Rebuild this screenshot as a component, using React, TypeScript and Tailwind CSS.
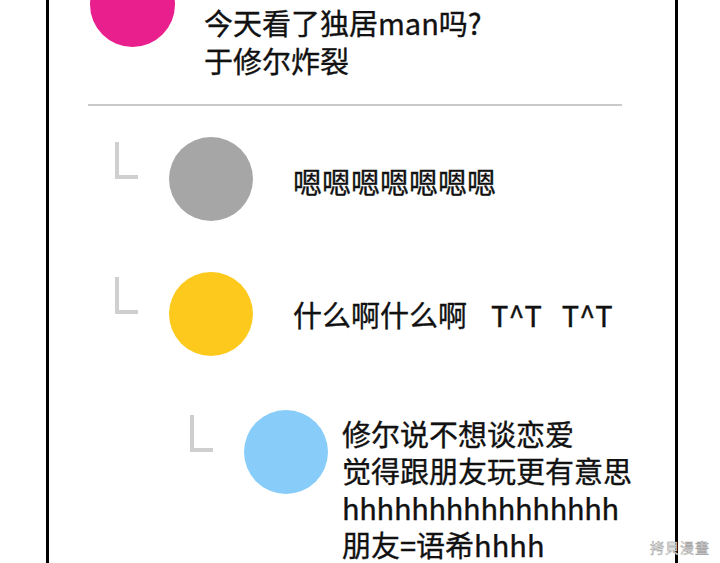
const FONT = "font-['Noto_Sans_CJK_SC','Noto_Sans',sans-serif]";
const TEXT = "text-[29px] [-webkit-text-stroke:0.35px_#111]";

function Avatar({ color, big }: { color: string; big?: boolean }) {
  return <div className={`${big ? "w-[85px] h-[85px]" : "w-[84px] h-[84px]"} shrink-0 rounded-full ${color}`} />;
}

function Corner() {
  // reply marker: thin grey "L"
  return <div className="self-start mt-[5px] w-[23px] h-[37px] shrink-0 border-l-4 border-b-4 border-[#cfcfcf]" />;
}

export default function App() {
  return (
    <div className={`relative w-[720px] h-[563px] overflow-hidden bg-white text-[#111] ${FONT}`}>
      <div className="ml-[46px] w-[632px] h-full border-x-[3px] border-black">
        {/* original post */}
        <div className="flex items-start pl-[41px]">
          <div className="-mt-[38px]">
            <Avatar color="bg-[#e91f8e]" big />
          </div>
          <div className={`ml-[29px] mt-[3px] mb-[3px] leading-[38px] ${TEXT}`}>
            <div>今天看了独居man吗?</div>
            <div>于修尔炸裂</div>
          </div>
        </div>

        <div className="ml-[39px] mt-[22px] w-[534px] h-[2px] bg-[#c9c9c9]" />

        {/* replies */}
        <div className="flex items-center mt-[31px] pl-[66px]">
          <Corner />
          <div className="ml-[31px]">
            <Avatar color="bg-[#a6a6a6]" />
          </div>
          <div className={`ml-[40px] mt-[4px] leading-[38px] ${TEXT}`}>嗯嗯嗯嗯嗯嗯嗯</div>
        </div>

        <div className="flex items-center mt-[51px] pl-[66px]">
          <Corner />
          <div className="ml-[31px]">
            <Avatar color="bg-[#fdc91d]" />
          </div>
          <div className={`ml-[40px] leading-[38px] whitespace-nowrap ${TEXT}`}>
            什么啊什么啊<span className="ml-[24px]">T^T</span>
            <span className="ml-[20px]">T^T</span>
          </div>
        </div>

        <div className="flex items-start mt-[54px] pl-[141px]">
          <Corner />
          <div className="ml-[31px]">
            <Avatar color="bg-[#88cdfa]" />
          </div>
          <div className={`ml-[14px] mt-[5px] leading-[37px] whitespace-nowrap ${TEXT}`}>
            <div>修尔说不想谈恋爱</div>
            <div>觉得跟朋友玩更有意思</div>
            <div className="tracking-[-0.3px]">hhhhhhhhhhhhhhhh</div>
            <div>朋友=语希hhhh</div>
          </div>
        </div>
      </div>

      {/* watermark */}
      <div className="absolute right-[10px] bottom-[9px] text-[14px] leading-none tracking-[1px] text-white [-webkit-text-stroke:0.5px_#9a9a9a] font-['Noto_Sans_CJK_TC',sans-serif]">
        拷貝漫畫
      </div>
    </div>
  );
}
